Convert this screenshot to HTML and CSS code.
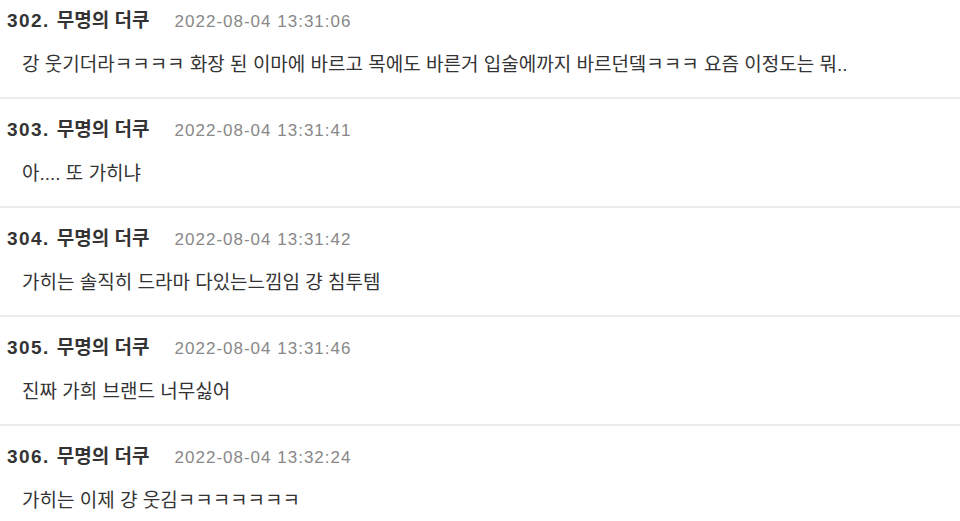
FILE: index.html
```
<!DOCTYPE html>
<html lang="ko">
<head>
<meta charset="utf-8">
<link rel="stylesheet" href="styles.css">
</head>
<body>
<div class="list">
  <div class="item">
    <div class="head"><span class="num"><span class="no">302.</span> 무명의 더쿠</span><span class="date">2022-08-04 13:31:06</span></div>
    <div class="body">강 웃기더라ㅋㅋㅋㅋ 화장 된 이마에 바르고 목에도 바른거 입술에까지 바르던뎈ㅋㅋㅋ 요즘 이정도는 뭐..</div>
  </div>
  <div class="item">
    <div class="head"><span class="num"><span class="no">303.</span> 무명의 더쿠</span><span class="date">2022-08-04 13:31:41</span></div>
    <div class="body">아.... 또 가히냐</div>
  </div>
  <div class="item">
    <div class="head"><span class="num"><span class="no">304.</span> 무명의 더쿠</span><span class="date">2022-08-04 13:31:42</span></div>
    <div class="body">가히는 솔직히 드라마 다있는느낌임 걍 침투템</div>
  </div>
  <div class="item">
    <div class="head"><span class="num"><span class="no">305.</span> 무명의 더쿠</span><span class="date">2022-08-04 13:31:46</span></div>
    <div class="body">진짜 가희 브랜드 너무싫어</div>
  </div>
  <div class="item">
    <div class="head"><span class="num"><span class="no">306.</span> 무명의 더쿠</span><span class="date">2022-08-04 13:32:24</span></div>
    <div class="body">가히는 이제 걍 웃김ㅋㅋㅋㅋㅋㅋㅋ</div>
  </div>
</div>
</body>
</html>
```
FILE: styles.css
```
html, body {
  margin: 0;
  padding: 0;
  background: #fff;
}
body {
  font-family: "Liberation Sans", "Noto Sans CJK KR", sans-serif;
  color: #333;
  overflow: hidden;
}
.list {
  margin-top: -10px;
}
.item {
  height: 109px;
  box-sizing: border-box;
  border-bottom: 2px solid #ebebeb;
  padding: 18px 0 0 7px;
}
.head {
  display: flex;
  align-items: baseline;
  height: 26px;
  line-height: 26px;
}
.num {
  font-size: 19px;
  font-weight: bold;
  color: #333;
}
.no {
  letter-spacing: 1.4px;
  margin-right: 2px;
}
.date {
  margin-left: 25px;
  font-size: 17px;
  letter-spacing: 1px;
  color: #888;
}
.body {
  margin-top: 17px;
  padding-left: 15px;
  font-size: 19px;
  line-height: 28px;
  color: #333;
}
```
